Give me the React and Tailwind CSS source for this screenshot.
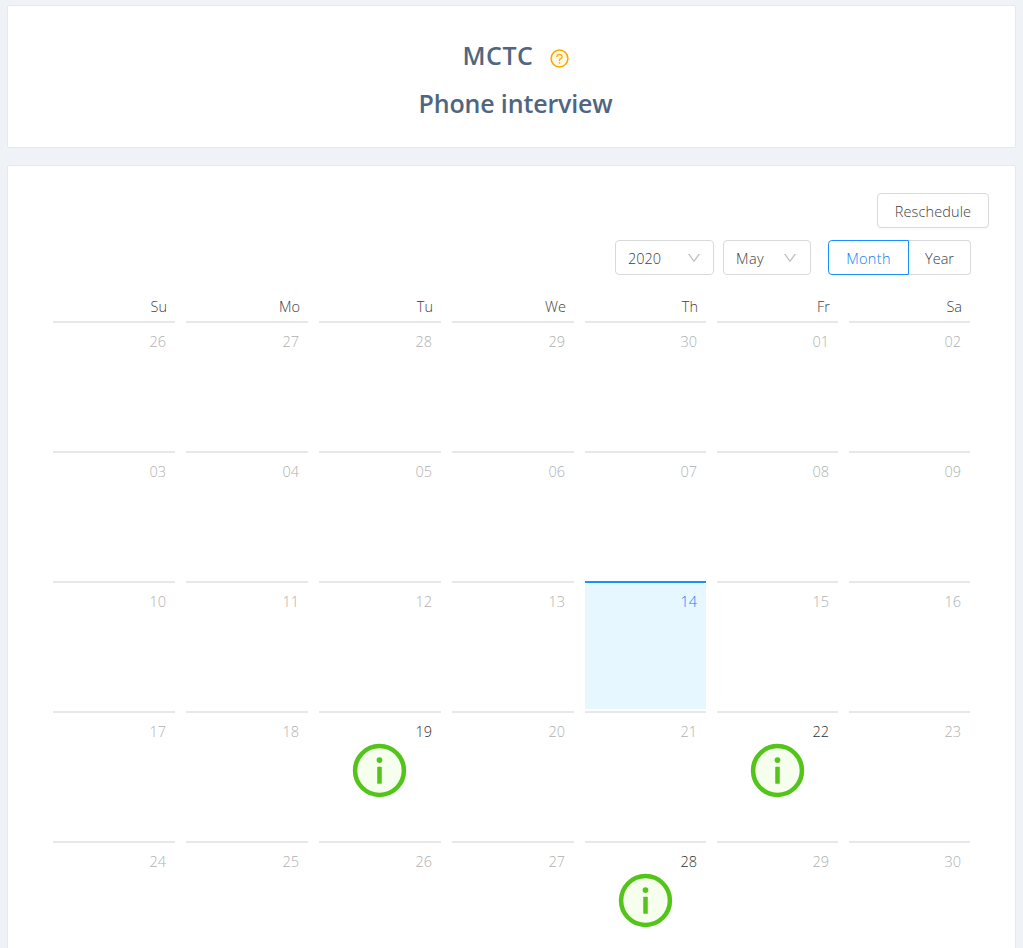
const WEEKDAYS = ['Su', 'Mo', 'Tu', 'We', 'Th', 'Fr', 'Sa'];

const WEEKS = [
  ['26', '27', '28', '29', '30', '01', '02'],
  ['03', '04', '05', '06', '07', '08', '09'],
  ['10', '11', '12', '13', '14', '15', '16'],
  ['17', '18', '19', '20', '21', '22', '23'],
  ['24', '25', '26', '27', '28', '29', '30'],
];

const TODAY = '2-4';
const OPEN_SLOTS = ['3-2', '3-5', '4-4'];

const GRID = 'grid grid-cols-[122px_122px_122px_122px_121px_121px_121px] gap-x-[11px]';

function QuestionIcon() {
  return (
    <svg viewBox="0 0 1024 1024" className="mt-[5px] size-[21px] shrink-0">
      <circle cx="512" cy="512" r="410" fill="#fff9e6" stroke="#ffa500" strokeWidth="76" />
      <path
        fill="#ffa500"
        d="M623.6 316.7C593.6 290.4 554 276 512 276s-81.6 14.5-111.6 40.7C369.2 344 352 380.7 352 420v7.6c0 4.4 3.6 8 8 8h48c4.4 0 8-3.6 8-8V420c0-44.1 43.1-80 96-80s96 35.9 96 80c0 31.1-22 59.6-56.1 72.7-21.2 8.1-39.2 22.3-52.1 40.9-13.1 19-19.9 41.8-19.9 64.9V620c0 4.4 3.6 8 8 8h48c4.4 0 8-3.6 8-8v-22.7a48.3 48.3 0 0 1 30.9-44.8c59-22.7 97.1-74.7 97.1-132.5.1-39.3-17.1-76-48.3-103.3zM472 732a40 40 0 1 0 80 0 40 40 0 1 0-80 0z"
      />
    </svg>
  );
}

function InfoIcon() {
  return (
    <svg viewBox="0 0 1024 1024" className="size-[61px]">
      <circle cx="512" cy="512" r="410" fill="#f6ffed" stroke="#52c41a" strokeWidth="76" />
      <circle cx="512" cy="336" r="48" fill="#52c41a" />
      <rect x="474" y="448" width="76" height="288" rx="8" fill="#52c41a" />
    </svg>
  );
}

function DownIcon() {
  return (
    <svg viewBox="0 0 1024 1024" className="size-4 shrink-0" fill="#bfbfbf">
      <path d="M884 256h-75c-5.1 0-9.9 2.5-12.9 6.6L512 654.2 227.9 262.6c-3-4.1-7.8-6.6-12.9-6.6h-75c-6.5 0-10.3 7.4-6.5 12.7l352.6 486.1c12.8 17.6 39 17.6 51.7 0l352.6-486.1c3.9-5.3.1-12.7-6.4-12.7z" />
    </svg>
  );
}

function Select({ value, className }) {
  return (
    <button
      className={`flex h-[35px] items-center justify-between rounded-[4px] border border-[#d9d9d9] bg-white pl-3 ${className}`}
    >
      <span className="pt-0.5">{value}</span>
      <DownIcon />
    </button>
  );
}

function DayCell({ label, today, open }) {
  const tone = today
    ? 'border-[#1890ff] bg-[#e6f7ff] text-[#0a80f5]'
    : open
      ? 'border-[#e8e8e8] text-[#303030]'
      : 'border-[#e8e8e8] text-[#b0b0b0]';
  return (
    <div className={`flex h-32 flex-col border-t-2 ${tone}`}>
      <div className="h-[27px] pr-[9px] pt-[7px] text-right leading-6">{label}</div>
      {open && (
        <div className="-ml-px flex justify-center">
          <InfoIcon />
        </div>
      )}
    </div>
  );
}

export default function App() {
  return (
    <div className="flex h-[948px] w-[1023px] flex-col gap-[17px] overflow-hidden bg-[#eff3f8] pl-[7px] pt-[5px] font-['Open_Sans',sans-serif] text-[14.5px] font-[330] text-[#404040]">
      <header className="flex h-[143px] w-[1009px] shrink-0 flex-col items-center rounded-[2px] border border-[#e8e8e8] bg-white pl-[9px] pt-[26px] text-[25px] font-[580] text-[#506680]">
        <div className="flex h-12 items-center gap-4 pl-px">
          <h1 className="tracking-[0.5px]">MCTC</h1>
          <QuestionIcon />
        </div>
        <h2 className="flex h-12 items-center pr-px tracking-[-0.15px]">Phone interview</h2>
      </header>

      <main className="flex h-[900px] w-[1009px] shrink-0 flex-col rounded-[2px] border border-[#e8e8e8] bg-white pt-[27px]">
        <div className="flex justify-end pr-[26px]">
          <button className="h-[35px] w-28 rounded-[4px] border border-[#d9d9d9] bg-white pt-0.5 tracking-[0.12px] shadow-[0_2px_0_rgba(0,0,0,0.015)]">
            Reschedule
          </button>
        </div>

        <div className="mt-3 flex justify-end pr-11">
          <Select value="2020" className="w-[99px] pr-[11px]" />
          <Select value="May" className="ml-[9px] w-[88px] pr-3 tracking-[0.4px]" />
          <div className="ml-[17px] flex">
            <button className="h-[35px] w-[81px] rounded-l-[4px] border border-[#1890ff] pt-0.5 tracking-[0.35px] text-[#0a80f5]">
              Month
            </button>
            <button className="h-[35px] w-[62px] rounded-r-[4px] border border-l-0 border-[#d9d9d9] pt-0.5">
              Year
            </button>
          </div>
        </div>

        <div className="ml-[45px] mt-[20px]">
          <div className={GRID}>
            {WEEKDAYS.map((day) => (
              <div key={day} className="h-[26px] pr-2 text-right leading-6">
                {day}
              </div>
            ))}
          </div>
          <div className={`${GRID} gap-y-0.5`}>
            {WEEKS.map((week, w) =>
              week.map((label, d) => {
                const key = `${w}-${d}`;
                return (
                  <DayCell
                    key={key}
                    label={label}
                    today={key === TODAY}
                    open={OPEN_SLOTS.includes(key)}
                  />
                );
              }),
            )}
          </div>
        </div>
      </main>
    </div>
  );
}
